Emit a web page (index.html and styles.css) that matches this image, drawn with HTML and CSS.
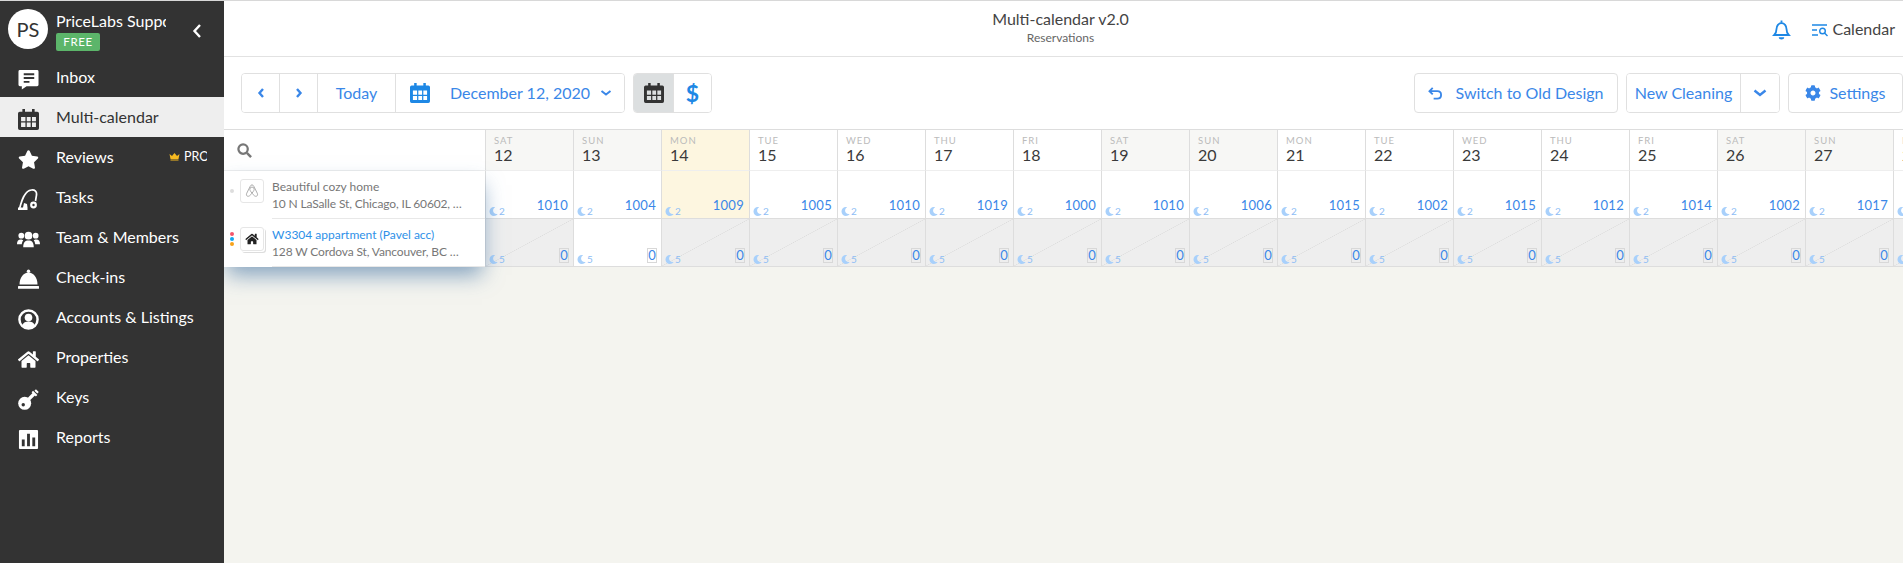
FILE: index.html
```html
<!DOCTYPE html>
<html lang="en">
<head>
<meta charset="utf-8">
<title>Multi-calendar</title>
<link rel="stylesheet" href="styles.css">
</head>
<body>
<svg class="defs" width="0" height="0" aria-hidden="true">
  <symbol id="moon" viewBox="0 0 512 512"><path d="M283.2 512c79 0 151-35.9 198.9-94.8 7-8.7-.7-21.4-11.6-19.3-124.2 23.6-238.3-71.6-238.3-197 0-72.2 38.7-138.6 101.5-174.4 9.7-5.5 7.300-20.200-3.700-22.200A258 258 0 0 0 283.200 0c-141.300 0-256 114.500-256 256s114.700 256 256 256z"/></symbol>
  <symbol id="home" viewBox="0 0 576 512"><path d="M280.370 148.260L96 300.110V464a16 16 0 0 0 16 16l112.060-.29a16 16 0 0 0 15.920-16V368a16 16 0 0 1 16-16h64a16 16 0 0 1 16 16v95.640a16 16 0 0 0 16 16.050L464 480a16 16 0 0 0 16-16V300L295.670 148.260a12.190 12.190 0 0 0-15.300 0zM571.600 251.470L488 182.560V44.050a12 12 0 0 0-12-12h-56a12 12 0 0 0-12 12v72.610L318.470 43a48 48 0 0 0-61 0L4.340 251.470a12 12 0 0 0-1.600 16.900l25.500 31A12 12 0 0 0 45.150 301l235.220-193.740a12.190 12.190 0 0 1 15.300 0L530.900 301a12 12 0 0 0 16.900-1.600l25.500-31a12 12 0 0 0-1.700-16.930z"/></symbol>
  <symbol id="cal" viewBox="0 0 24 24"><path fill-rule="evenodd" d="M5 0h3v3h8V0h3v3h3a2 2 0 0 1 2 2v17a2 2 0 0 1-2 2H2a2 2 0 0 1-2-2V5a2 2 0 0 1 2-2h3zM3.500 9v5h5V9zm6.500 0v5h4.500V9zm6 0v5h4.500V9zM3.500 15.500v5h5v-5zm6.500 0v5h4.500v-5zm6 0v5h4.500v-5z"/></symbol>
</svg>

<aside class="sidebar">
  <div class="profile">
    <div class="avatar">PS</div>
    <div class="who">
      <div class="who-name">PriceLabs Support</div>
      <span class="badge">FREE</span>
    </div>
    <svg class="collapse" viewBox="0 0 10 16"><path d="M8 2L2.500 8 8 14" fill="none" stroke="#fff" stroke-width="2.400"/></svg>
  </div>
  <nav class="nav">
    <a class="nav-item"><svg class="nav-icon" viewBox="0 0 22 22"><path fill="#fff" d="M2 1h18a1.500 1.500 0 0 1 1.500 1.500v14A1.500 1.500 0 0 1 20 18H9l-5 3.500V18H2a1.500 1.500 0 0 1-1.500-1.500v-14A1.500 1.500 0 0 1 2 1z"/><path fill="#333" d="M6 4.500h11v2H6zM6 8.500h11v2H6zM6 12.500h6v2H6z"/></svg><span class="nav-label">Inbox</span></a>
    <a class="nav-item is-active"><svg class="nav-icon" viewBox="0 0 24 24"><use href="#cal" fill="#333"/></svg><span class="nav-label">Multi-calendar</span></a>
    <a class="nav-item"><svg class="nav-icon" viewBox="0 0 576 512"><path fill="#fff" d="M259.300 17.800L194 150.200 47.900 171.500c-26.200 3.800-36.700 36.100-17.700 54.600l105.700 103-25 145.500c-4.500 26.300 23.200 46 46.400 33.700L288 439.600l130.700 68.700c23.200 12.200 50.900-7.400 46.400-33.700l-25-145.500 105.700-103c19-18.500 8.500-50.800-17.700-54.600L382 150.200 316.700 17.800c-11.700-23.600-45.600-23.900-57.400 0z"/></svg><span class="nav-label">Reviews</span><span class="pro"><svg class="crown" viewBox="0 0 22 16"><path fill="#f5b921" d="M1 3l5 4 5-6 5 6 5-4-2 10H3zM3 14h16v2H3z"/></svg>PRO</span></a>
    <a class="nav-item"><svg class="nav-icon" viewBox="0 0 21 21"><path fill="none" stroke="#fff" stroke-width="1.700" d="M1.500 20C3.500 12 6.500 1.500 13.500 1c3.500-.3 5.500 1.500 5 5l-1 6"/><path fill="#fff" d="M0 18.500h9.500V21H0zM5 18.500l1-4.500 3 1 .5 3.500z"/><circle cx="15.500" cy="16" r="3.400" fill="#fff"/><circle cx="15.500" cy="16" r="1.200" fill="#333"/></svg><span class="nav-label">Tasks</span></a>
    <a class="nav-item"><svg class="nav-icon nav-icon-wide" viewBox="0 0 24 18"><g fill="#fff"><circle cx="4.500" cy="5" r="3"/><circle cx="19.500" cy="5" r="3"/><circle cx="12" cy="5" r="4"/><path d="M0 14c0-3 1-5 4-5 1 0 2 .3 2.500 1-1 1-1.500 3-1.500 4zM24 14c0-3-1-5-4-5-1 0-2 .3-2.500 1 1 1 1.500 3 1.500 4zM6.500 17c0-5 2-7 5.500-7s5.500 2 5.500 7z"/></g></svg><span class="nav-label">Team &amp; Members</span></a>
    <a class="nav-item"><svg class="nav-icon" viewBox="0 0 21 20"><g fill="#fff"><circle cx="10.500" cy="1.700" r="1.700"/><path d="M1.500 15C1.500 8 5.500 3 10.500 3s9 5 9 12z"/><rect x="0" y="16.500" width="21" height="2.800" rx=".5"/></g></svg><span class="nav-label">Check-ins</span></a>
    <a class="nav-item"><svg class="nav-icon" viewBox="0 0 22 22"><circle cx="11" cy="11" r="9.500" fill="none" stroke="#fff" stroke-width="2.600"/><circle cx="11" cy="9" r="4" fill="#fff"/><path fill="#fff" d="M4.500 17c1-3 3.500-4 6.500-4s5.500 1 6.500 4c-2 2-4 3-6.500 3s-4.500-1-6.500-3z"/></svg><span class="nav-label">Accounts &amp; Listings</span></a>
    <a class="nav-item"><svg class="nav-icon" viewBox="0 0 576 512"><use href="#home" fill="#fff"/></svg><span class="nav-label">Properties</span></a>
    <a class="nav-item"><svg class="nav-icon" viewBox="0 0 22 22"><circle cx="7" cy="15" r="6.800" fill="#fff"/><path stroke="#fff" stroke-width="3.500" d="M9 13l8-8"/><path stroke="#fff" stroke-width="2.200" d="M15 2.500l4.500 4.500M18 1l3 3"/><circle cx="5.500" cy="16.500" r="1.800" fill="#333"/></svg><span class="nav-label">Keys</span></a>
    <a class="nav-item"><svg class="nav-icon" viewBox="0 0 22 22"><rect x="1" y="1" width="20" height="20" rx="1" fill="#fff"/><path fill="#333" d="M4 11h3v7H4zM9.500 5h3v13h-3zM15 9h3v9h-3z"/></svg><span class="nav-label">Reports</span></a>
  </nav>
</aside>

<main class="main">
  <header class="topbar">
    <div class="title">
      <div class="title-main">Multi-calendar v2.0</div>
      <div class="title-sub">Reservations</div>
    </div>
    <div class="top-actions">
      <svg class="bell" viewBox="0 0 20 22"><path fill="none" stroke="#1e88e5" stroke-width="2" d="M2 16.500c1.500-1.500 2.500-3 2.500-6.500 0-3.500 2.300-6.500 5.500-6.500s5.500 3 5.500 6.500c0 3.500 1 5 2.500 6.500z"/><path fill="#1e88e5" d="M9 .500h2V3H9zM7 19h6c0 1.500-1.300 2.500-3 2.500S7 20.500 7 19z"/></svg>
      <span class="cal-switch">
        <svg class="list-search" viewBox="0 0 16 14"><g fill="none" stroke="#1e88e5" stroke-width="1.400"><path d="M0 2h15M0 7h5M0 12h6"/><circle cx="10.500" cy="8" r="2.800"/><path d="M12.500 10l3 3"/></g></svg>
        <span class="cal-label">Calendar</span>
      </span>
    </div>
  </header>

  <section class="toolbar">
    <div class="btn-group">
      <button class="btn btn-prev"><svg class="chev" viewBox="0 0 8 12"><path d="M6 2L2.500 6 6 10" fill="none" stroke="currentColor" stroke-width="2.400"/></svg></button>
      <button class="btn btn-next"><svg class="chev" viewBox="0 0 8 12"><path d="M2 2l3.500 4L2 10" fill="none" stroke="currentColor" stroke-width="2.400"/></svg></button>
      <button class="btn btn-today"><span class="btn-label">Today</span></button>
      <button class="btn btn-date">
        <svg class="btn-cal" viewBox="0 0 24 24"><use href="#cal" fill="#1e88e5"/></svg>
        <span class="btn-label date-label">December 12, 2020</span>
        <svg class="caret" viewBox="0 0 12 8"><path d="M1.500 2L6 5.500 10.500 2" fill="none" stroke="currentColor" stroke-width="2"/></svg>
      </button>
    </div>
    <div class="btn-group view-group">
      <button class="btn btn-view is-on"><svg class="btn-cal" viewBox="0 0 24 24"><use href="#cal" fill="#333"/></svg></button>
      <button class="btn btn-view btn-dollar">$</button>
    </div>
    <div class="toolbar-right">
      <button class="btn btn-solo btn-switch"><svg class="undo" viewBox="0 0 16 14"><path d="M5 1L1.500 4.500 5 8M2 4.500h8c2.500 0 4 1.600 4 4s-1.500 4-4 4H6" fill="none" stroke="currentColor" stroke-width="2"/></svg><span class="btn-label">Switch to Old Design</span></button>
      <div class="btn-group">
        <button class="btn btn-clean"><span class="btn-label">New Cleaning</span></button>
        <button class="btn btn-clean-caret"><svg class="caret-lg" viewBox="0 0 14 8"><path d="M1.500 1.500L7 6l5.500-4.500" fill="none" stroke="currentColor" stroke-width="2.400"/></svg></button>
      </div>
      <button class="btn btn-solo btn-settings"><svg class="gear" viewBox="0 0 512 512"><path fill="currentColor" d="M487.400 315.700l-42.600-24.600c4.300-23.200 4.300-47 0-70.200l42.600-24.600c4.900-2.800 7.100-8.600 5.500-14-11.100-35.600-30-67.800-54.700-94.600-3.800-4.100-10-5.100-14.800-2.300L380.800 110c-17.900-15.400-38.500-27.300-60.800-35.100V25.800c0-5.600-3.900-10.500-9.400-11.700-36.700-8.200-74.300-7.800-109.200 0-5.500 1.200-9.400 6.100-9.400 11.700V75c-22.200 7.900-42.800 19.800-60.800 35.100L88.700 85.500c-4.900-2.800-11-1.900-14.800 2.300-24.700 26.700-43.600 58.900-54.700 94.600-1.700 5.400.6 11.200 5.500 14L67.300 221c-4.300 23.200-4.300 47 0 70.200l-42.600 24.600c-4.900 2.800-7.100 8.600-5.500 14 11.100 35.600 30 67.800 54.700 94.600 3.800 4.100 10 5.100 14.800 2.300l42.600-24.600c17.900 15.400 38.500 27.300 60.800 35.100v49.200c0 5.600 3.900 10.500 9.400 11.700 36.700 8.200 74.300 7.800 109.200 0 5.500-1.200 9.400-6.100 9.400-11.700v-49.200c22.200-7.900 42.800-19.800 60.800-35.100l42.600 24.600c4.900 2.800 11 1.900 14.800-2.300 24.700-26.700 43.600-58.900 54.700-94.600 1.500-5.500-.7-11.300-5.600-14.100zM256 336c-44.100 0-80-35.900-80-80s35.900-80 80-80 80 35.900 80 80-35.900 80-80 80z"/></svg><span class="btn-label">Settings</span></button>
    </div>
  </section>

  <section class="calendar">
    <div class="search-cell"><svg class="search" viewBox="0 0 16 16"><circle cx="6.500" cy="6.500" r="5" fill="none" stroke="#777" stroke-width="2.400"/><path d="M10.500 10.500L15 15" stroke="#777" stroke-width="2.600"/></svg></div>
    <div class="listings">
      <div class="listing">
        <div class="dots"><i class="dot dot-muted"></i></div>
        <div class="thumb"><svg class="airbnb" viewBox="0 0 16 16"><path fill="none" stroke="#aaa" stroke-width="1.100" d="M8 10.500C6 8 5.500 6.800 5.500 6a2.500 2.500 0 0 1 5 0c0 .8-.5 2-2.500 4.500zm0 0c2 2.500 3.500 4 5 3.500 1.500-.5 1.700-2 1-3.500L10 2.500C9.500 1.500 8.800 1 8 1s-1.500.5-2 1.500L2 10.500c-.7 1.500-.5 3 1 3.500 1.500.5 3-1 5-3.500z"/></svg></div>
        <div class="listing-text">
          <div class="listing-name">Beautiful cozy home</div>
          <div class="listing-addr">10 N LaSalle St, Chicago, IL 60602, …</div>
        </div>
      </div>
      <div class="listing">
        <div class="dots"><i class="dot dot-red"></i><i class="dot dot-blue"></i><i class="dot dot-orange"></i></div>
        <div class="thumb thumb-stack"><svg class="thumb-home" viewBox="0 0 576 512"><use href="#home" fill="#222"/></svg></div>
        <div class="listing-text">
          <div class="listing-name is-link">W3304 appartment (Pavel acc)</div>
          <div class="listing-addr">128 W Cordova St, Vancouver, BC …</div>
        </div>
      </div>
    </div>

    <div class="head weekend"><small>SAT</small><b>12</b></div>
    <div class="head weekend"><small>SUN</small><b>13</b></div>
    <div class="head today"><small>MON</small><b>14</b></div>
    <div class="head"><small>TUE</small><b>15</b></div>
    <div class="head"><small>WED</small><b>16</b></div>
    <div class="head"><small>THU</small><b>17</b></div>
    <div class="head"><small>FRI</small><b>18</b></div>
    <div class="head weekend"><small>SAT</small><b>19</b></div>
    <div class="head weekend"><small>SUN</small><b>20</b></div>
    <div class="head"><small>MON</small><b>21</b></div>
    <div class="head"><small>TUE</small><b>22</b></div>
    <div class="head"><small>WED</small><b>23</b></div>
    <div class="head"><small>THU</small><b>24</b></div>
    <div class="head"><small>FRI</small><b>25</b></div>
    <div class="head weekend"><small>SAT</small><b>26</b></div>
    <div class="head weekend"><small>SUN</small><b>27</b></div>
    <div class="head"><small>MON</small><b>28</b></div>

    <div class="cell"><span class="nights"><svg><use href="#moon"/></svg>2</span><span class="price">1010</span></div>
    <div class="cell"><span class="nights"><svg><use href="#moon"/></svg>2</span><span class="price">1004</span></div>
    <div class="cell today"><span class="nights"><svg><use href="#moon"/></svg>2</span><span class="price">1009</span></div>
    <div class="cell"><span class="nights"><svg><use href="#moon"/></svg>2</span><span class="price">1005</span></div>
    <div class="cell"><span class="nights"><svg><use href="#moon"/></svg>2</span><span class="price">1010</span></div>
    <div class="cell"><span class="nights"><svg><use href="#moon"/></svg>2</span><span class="price">1019</span></div>
    <div class="cell"><span class="nights"><svg><use href="#moon"/></svg>2</span><span class="price">1000</span></div>
    <div class="cell"><span class="nights"><svg><use href="#moon"/></svg>2</span><span class="price">1010</span></div>
    <div class="cell"><span class="nights"><svg><use href="#moon"/></svg>2</span><span class="price">1006</span></div>
    <div class="cell"><span class="nights"><svg><use href="#moon"/></svg>2</span><span class="price">1015</span></div>
    <div class="cell"><span class="nights"><svg><use href="#moon"/></svg>2</span><span class="price">1002</span></div>
    <div class="cell"><span class="nights"><svg><use href="#moon"/></svg>2</span><span class="price">1015</span></div>
    <div class="cell"><span class="nights"><svg><use href="#moon"/></svg>2</span><span class="price">1012</span></div>
    <div class="cell"><span class="nights"><svg><use href="#moon"/></svg>2</span><span class="price">1014</span></div>
    <div class="cell"><span class="nights"><svg><use href="#moon"/></svg>2</span><span class="price">1002</span></div>
    <div class="cell"><span class="nights"><svg><use href="#moon"/></svg>2</span><span class="price">1017</span></div>
    <div class="cell"><span class="nights"><svg><use href="#moon"/></svg>2</span><span class="price">1017</span></div>

    <div class="cell blocked"><span class="nights"><svg><use href="#moon"/></svg>5</span><span class="zero">0</span></div>
    <div class="cell"><span class="nights"><svg><use href="#moon"/></svg>5</span><span class="zero">0</span></div>
    <div class="cell blocked"><span class="nights"><svg><use href="#moon"/></svg>5</span><span class="zero">0</span></div>
    <div class="cell blocked"><span class="nights"><svg><use href="#moon"/></svg>5</span><span class="zero">0</span></div>
    <div class="cell blocked"><span class="nights"><svg><use href="#moon"/></svg>5</span><span class="zero">0</span></div>
    <div class="cell blocked"><span class="nights"><svg><use href="#moon"/></svg>5</span><span class="zero">0</span></div>
    <div class="cell blocked"><span class="nights"><svg><use href="#moon"/></svg>5</span><span class="zero">0</span></div>
    <div class="cell blocked"><span class="nights"><svg><use href="#moon"/></svg>5</span><span class="zero">0</span></div>
    <div class="cell blocked"><span class="nights"><svg><use href="#moon"/></svg>5</span><span class="zero">0</span></div>
    <div class="cell blocked"><span class="nights"><svg><use href="#moon"/></svg>5</span><span class="zero">0</span></div>
    <div class="cell blocked"><span class="nights"><svg><use href="#moon"/></svg>5</span><span class="zero">0</span></div>
    <div class="cell blocked"><span class="nights"><svg><use href="#moon"/></svg>5</span><span class="zero">0</span></div>
    <div class="cell blocked"><span class="nights"><svg><use href="#moon"/></svg>5</span><span class="zero">0</span></div>
    <div class="cell blocked"><span class="nights"><svg><use href="#moon"/></svg>5</span><span class="zero">0</span></div>
    <div class="cell blocked"><span class="nights"><svg><use href="#moon"/></svg>5</span><span class="zero">0</span></div>
    <div class="cell blocked"><span class="nights"><svg><use href="#moon"/></svg>5</span><span class="zero">0</span></div>
    <div class="cell blocked"><span class="nights"><svg><use href="#moon"/></svg>5</span><span class="zero">0</span></div>
  </section>
</main>
</body>
</html>
```

FILE: styles.css
```css
* { box-sizing: border-box; }
html, body { height: 100%; }
body {
  margin: 0;
  display: flex;
  height: 563px;
  overflow: hidden;
  font-family: Lato, "Liberation Sans", sans-serif;
  background: #f4f4ef;
  color: #333;
  border-top: 1px solid #d8d8d8;
}
.defs { position: absolute; }

/* Sidebar */
.sidebar { width: 224px; flex: none; background: #333; color: #fff; }
.profile { height: 56px; display: flex; align-items: flex-start; padding: 8px 0 0 8px; position: relative; }
.avatar {
  width: 40px; height: 40px; border-radius: 50%; background: #fff; color: #333;
  font-size: 20px; display: flex; align-items: center; justify-content: center; flex: none;
}
.who { margin-left: 8px; width: 110px; }
.who-name { font-size: 16px; line-height: 18px; margin-top: 3px; white-space: nowrap; overflow: hidden; }
.badge {
  display: inline-block; background: #5cb56a; color: #fff; font-size: 11.500px; line-height: 18px;
  width: 44px; text-align: center; letter-spacing: .6px; border-radius: 2px;
}
.collapse { width: 10px; height: 16px; margin: 14px 0 0 26px; }
.nav-item { display: flex; align-items: center; height: 40px; padding-left: 18px; font-size: 16px; color: #fff; position: relative; }
.nav-item.is-active { background: #eee; color: #333; }
.nav-icon { width: 21px; height: 21px; flex: none; margin: 4px 17px 0 0; }
.nav-icon-wide { width: 23px; margin-left: -1px; margin-right: 16px; }
.nav-label { margin-bottom: 2px; }
.pro {
  position: absolute; left: 169px; top: 0; height: 40px; width: 38px; padding-bottom: 1px; display: flex; align-items: center;
  font-size: 12.500px; overflow: hidden; white-space: nowrap;
}
.crown { width: 11px; height: 9px; margin-right: 4px; flex: none; }

/* Main column */
.main { flex: 1; min-width: 0; display: flex; flex-direction: column; overflow: hidden; }
.topbar {
  height: 56px; flex: none; background: #fff; border-bottom: 1px solid #e2e2e2;
  display: flex; align-items: center; justify-content: center; position: relative; padding-right: 6px;
}
.title { text-align: center; margin-top: -2px; }
.title-main { font-size: 16px; line-height: 20px; color: #444; }
.title-sub { font-size: 12px; line-height: 16px; color: #666; margin-top: 1px; }
.top-actions { position: absolute; right: 8px; top: 18px; display: flex; align-items: center; }
.bell { width: 19px; height: 20px; }
.cal-switch { display: flex; align-items: center; margin-left: 21px; font-size: 16px; color: #444; }
.cal-label { margin-bottom: 2px; }
.list-search { width: 16px; height: 14px; margin-right: 4px; }

/* Toolbar */
.toolbar { height: 72px; flex: none; background: #fff; display: flex; align-items: flex-start; padding: 16px 0 0 17px; }
.btn-group { display: flex; border: 1px solid #e0e0e0; border-radius: 4px; height: 40px; overflow: hidden; background: #fff; }
.btn {
  font: inherit; font-size: 16px; color: #3a87e8; background: #fff; border: 0; padding: 0; height: 100%;
  display: flex; align-items: center; justify-content: center;
}
.btn-label { margin-bottom: 2px; }
.btn-group .btn + .btn { border-left: 1px solid #e0e0e0; }
.btn-prev { width: 37px; }
.btn-next { width: 38px; }
.chev { width: 8px; height: 12px; }
.btn-today { width: 78px; }
.btn-date { width: 229px; justify-content: flex-start; padding-left: 14px; }
.btn-cal { width: 20px; height: 20px; flex: none; }
.date-label { margin-left: 20px; }
.caret { width: 12px; height: 8px; margin-left: 10px; }
.view-group { margin-left: 8px; }
.btn-view { width: 39px; }
.btn-view.is-on { background: #dcdfe0; }
.btn-dollar { width: 38px; font-size: 23px; font-weight: 700; color: #1e88e5; }
.toolbar-right { margin-left: auto; display: flex; gap: 8px; }
.btn-solo { border: 1px solid #e0e0e0; border-radius: 4px; height: 40px; }
.btn-switch { width: 204px; }
.undo { width: 15px; height: 13px; margin-right: 12px; }
.btn-clean { width: 113px; }
.btn-clean-caret { width: 39px; }
.caret-lg { width: 14px; height: 8px; }
.btn-settings { width: 115px; }
.gear { width: 16px; height: 16px; margin-right: 8px; }

/* Calendar grid */
.calendar {
  display: grid;
  grid-template-columns: 261px repeat(17, 88px);
  grid-template-rows: 41px 48px 48px;
  border-top: 1px solid #ddd;
  flex: none;
  width: 1757px;
}
.search-cell { grid-column: 1; grid-row: 1; background: #fff; border-bottom: 1px solid #eee; display: flex; align-items: center; padding-left: 13px; position: relative; z-index: 2; }
.search { width: 15px; height: 15px; }
.listings { grid-column: 1; grid-row: 2 / 4; background: #fff; position: relative; z-index: 2; box-shadow: 0 11px 20px -3px rgba(60, 110, 160, .6); }
.listing { display: flex; height: 48px; align-items: flex-start; padding-left: 6px; position: relative; }
.listing-text { margin-left: 8px; width: 213px; border-bottom: 1px solid #e8e8e8; height: 48px; }
.dots { width: 5px; display: flex; flex-direction: column; gap: 1px; margin-top: 13px; flex: none; }
.dot { width: 4px; height: 4px; border-radius: 50%; display: block; }
.dot-muted { background: #ddd; margin-top: 5px; }
.dot-red { background: #f4566b; }
.dot-blue { background: #12a7ef; }
.dot-orange { background: #f7a21b; }
.thumb { width: 24px; height: 24px; margin: 8px 0 0 5px; border: 1px solid #e6e6e6; border-radius: 3px; display: flex; align-items: center; justify-content: center; flex: none; background: #fff; }
.thumb-stack { box-shadow: 1px 1px 0 #fff, 2px 2px 0 #ddd; }
.airbnb { width: 14px; height: 14px; }
.thumb-home { width: 14px; height: 12px; }
.listing-name { font-size: 12px; line-height: 17px; margin-top: 7px; color: #777; white-space: nowrap; }
.listing-name.is-link { color: #2e90e8; }
.listing-addr { font-size: 12px; line-height: 17px; color: #777; white-space: nowrap; letter-spacing: -.14px; }

.head { background: #fff; border-left: 1px solid #ddd; border-bottom: 1px solid #eee; padding: 3px 0 0 8px; }
.head small { display: block; font-size: 9.500px; line-height: 11px; color: #bbb; letter-spacing: 1px; margin-top: 2px; }
.head b { display: block; font-weight: 400; font-size: 16px; line-height: 20px; margin-top: -1px; color: #3a3a3a; }
.head.weekend { background: #f7f7f5; }
.head.today { background: #fdf6e0; }

.cell {
  background: #fff; border-left: 1px solid #ddd; border-bottom: 1px solid #ddd;
  display: flex; justify-content: space-between; align-items: flex-end; padding: 0 4px 1px 3px;
}
.cell.today { background: #fdf6e0; }
.cell.blocked {
  background: linear-gradient(to bottom right, transparent calc(50% - .5px), #dcdcdc 50%, transparent calc(50% + .5px)), #eee;
}
.nights { display: flex; align-items: center; font-size: 10px; line-height: 11px; color: #8dbdf5; }
.nights svg { width: 9px; height: 9px; fill: #a8d0fb; margin-right: 1px; }
.price { font-size: 13px; line-height: 16px; color: #3a87e8; margin: 0 1px 4px 0; letter-spacing: .3px; }
.zero { font-size: 13px; line-height: 13px; width: 10px; height: 15px; margin-bottom: 2px; text-align: center; color: #3a87e8; border: 1px solid #d8d8d8; }
```
